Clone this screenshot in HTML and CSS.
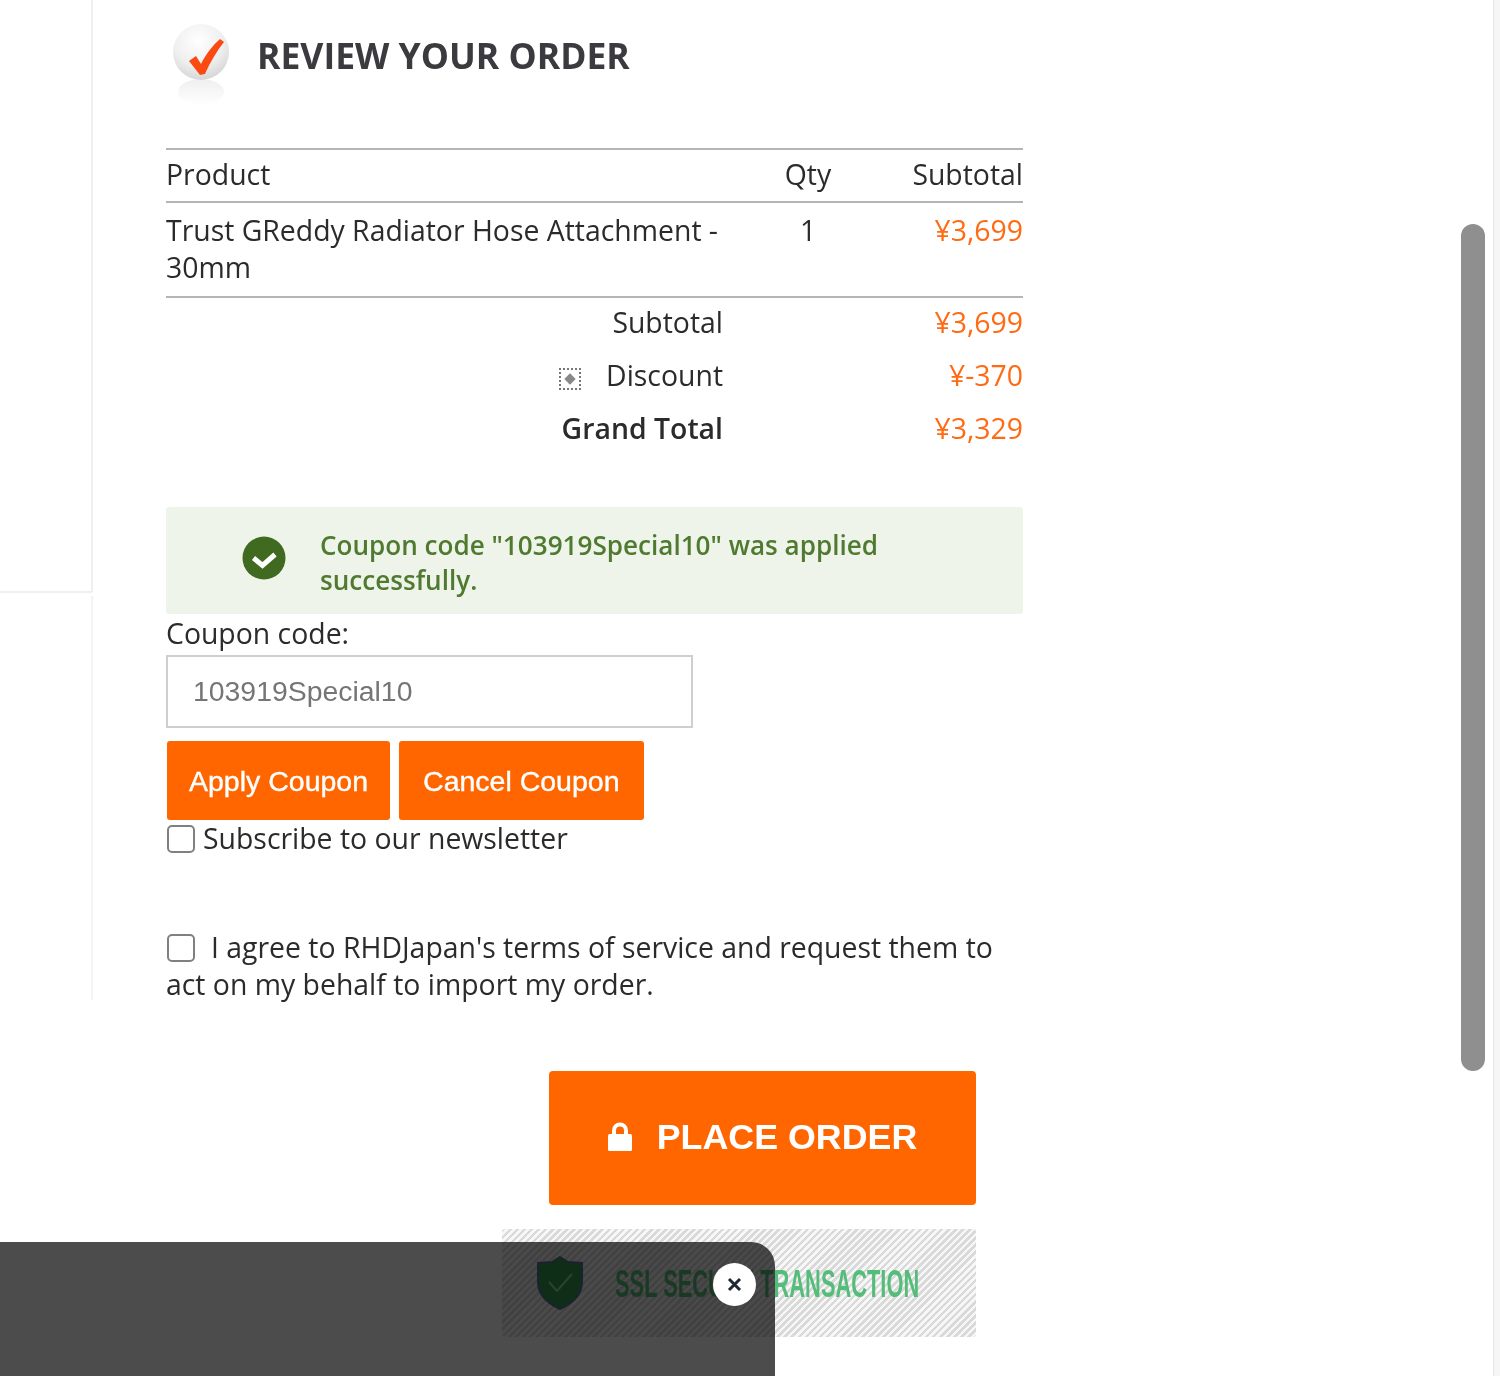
FILE: index.html
```html
<!DOCTYPE html>
<html lang="en">
<head>
    <meta charset="UTF-8">
    <title>Review Your Order</title>
    <link rel="stylesheet" href="styles.css">
</head>
<body>
    <div class="rail-top"></div>
    <div class="rail-bottom"></div>
    <div class="rail-cross"></div>

    <div class="review">
        <div class="review-title">
            <div class="step-icon">
                <svg width="62" height="82" viewBox="0 0 62 82">
                    <defs>
                        <radialGradient id="ball" cx="0.45" cy="0.3" r="0.8">
                            <stop offset="0" stop-color="#ffffff"/>
                            <stop offset="0.55" stop-color="#efefef"/>
                            <stop offset="1" stop-color="#cdcdcd"/>
                        </radialGradient>
                        <linearGradient id="shine" x1="0" y1="0" x2="0" y2="1">
                            <stop offset="0" stop-color="#efefef"/>
                            <stop offset="1" stop-color="#ffffff"/>
                        </linearGradient>
                    </defs>
                    <ellipse cx="31" cy="68" rx="23" ry="13" fill="url(#shine)"/>
                    <circle cx="31" cy="28" r="28" fill="url(#ball)"/>
                    <path d="M19 37 L26 32 L31 40 C36 30 43 21 50 15 L54 18 C47 27 40 38 35 50 L30 51 Z" fill="#fa4a12"/>
                </svg>
            </div>
            <h1>REVIEW YOUR ORDER</h1>
        </div>

        <table class="order-table">
            <thead>
                <tr>
                    <th class="col-name">Product</th>
                    <th class="col-qty">Qty</th>
                    <th class="col-sub">Subtotal</th>
                </tr>
            </thead>
            <tbody>
                <tr>
                    <td class="col-name">Trust GReddy Radiator Hose Attachment - 30mm</td>
                    <td class="col-qty">1</td>
                    <td class="col-sub price">¥3,699</td>
                </tr>
            </tbody>
            <tfoot>
                <tr>
                    <td class="total-label" colspan="2">Subtotal</td>
                    <td class="col-sub price">¥3,699</td>
                </tr>
                <tr>
                    <td class="total-label" colspan="2">
                        <span class="discount-icon"><i></i></span>Discount
                    </td>
                    <td class="col-sub price">¥-370</td>
                </tr>
                <tr class="grand">
                    <td class="total-label" colspan="2">Grand Total</td>
                    <td class="col-sub price">¥3,329</td>
                </tr>
            </tfoot>
        </table>

        <div class="coupon-ok">
            <svg class="ok-icon" width="44" height="44" viewBox="0 0 44 44">
                <circle cx="22" cy="22" r="21.5" fill="#3f6a1f"/>
                <path d="M11.5 22 L20.5 29.5 L33 18.5" fill="none" stroke="#fff" stroke-width="5"/>
            </svg>
            <p>Coupon code "103919Special10" was applied successfully.</p>
        </div>

        <label class="coupon-label" for="coupon">Coupon code:</label>
        <input class="coupon-input" id="coupon" type="text" value="103919Special10">
        <div class="coupon-buttons">
            <button type="button" class="btn-coupon">Apply Coupon</button>
            <button type="button" class="btn-coupon btn-cancel">Cancel Coupon</button>
        </div>

        <div class="subscribe">
            <span class="box"></span>
            <span>Subscribe to our newsletter</span>
        </div>

        <p class="terms"><span class="box"></span>I agree to RHDJapan's terms of service and request them to act on my behalf to import my order.</p>

        <div class="order-actions">
            <button type="button" class="btn-place">
                <svg width="24" height="29" viewBox="0 0 24 29">
                    <path d="M6 13 V8.5 a6 6 0 0 1 12 0 V13" fill="none" stroke="#fff" stroke-width="4"/>
                    <rect x="0" y="12" width="24" height="17" rx="1.5" fill="#fff"/>
                </svg>
                PLACE ORDER
            </button>
            <div class="ssl">
                <svg class="ssl-shield" width="46" height="54" viewBox="0 0 46 54">
                    <path d="M23 1 L31 6 L45 7 V26 C45 40 34 48 23 53 C12 48 1 40 1 26 V7 L15 6 Z" fill="#2f9a50" stroke="#5a6f9a" stroke-width="2"/>
                    <path d="M12 26 L20 35 L35 18" fill="none" stroke="#8fdca5" stroke-width="2"/>
                </svg>
                <span>SSL SECURE TRANSACTION</span>
            </div>
        </div>
    </div>

    <div class="scroll-thumb"></div>
    <div class="edge"></div>
    <div class="toast"></div>
    <button type="button" class="toast-close">
        <svg width="15" height="15" viewBox="0 0 15 15">
            <path d="M2 2 L13 13 M13 2 L2 13" stroke="#1f2733" stroke-width="3"/>
        </svg>
    </button>
</body>
</html>
```

FILE: styles.css
```css
html, body {
    margin: 0;
    height: 1376px;
    overflow: hidden;
}
body {
    position: relative;
    background-color: #fff;
    color: #2b2b2b;
    font-family: "Open Sans", sans-serif;
    font-size: 28.4px;
    line-height: 37px;
}

/* left column leftovers */
.rail-top {
    position: absolute;
    left: 91px;
    top: 0;
    width: 2px;
    height: 592px;
    background-color: #efefef;
}
.rail-bottom {
    position: absolute;
    left: 91px;
    top: 596px;
    width: 2px;
    height: 404px;
    background-color: #f4f4f4;
}
.rail-cross {
    position: absolute;
    left: 0;
    top: 591px;
    width: 92px;
    height: 2px;
    background-color: #efefef;
}

.review {
    width: 857px;
    margin-left: 166px;
}
.review-title {
    display: flex;
    align-items: flex-start;
    height: 148px;
}
.step-icon {
    margin: 24px 0 0 4px;
    width: 87px;
    flex-shrink: 0;
}
.review-title h1 {
    margin: 30px 0 0;
    font-size: 35.5px;
    line-height: 50px;
    font-weight: 700;
    color: #3b3b3f;
}

.order-table {
    width: 100%;
    border-collapse: collapse;
    table-layout: fixed;
    border-top: 2px solid #b5b5b5;
}
.order-table th {
    font-weight: 400;
    height: 49px;
    padding: 0 0 2px;
    border-bottom: 2px solid #b5b5b5;
}
.order-table td {
    padding: 0;
    vertical-align: top;
}
.order-table tbody td {
    padding: 9px 0 10px;
    border-bottom: 2px solid #b5b5b5;
}
.col-name {
    width: 600px;
    text-align: left;
}
.col-qty {
    text-align: center;
    width: 84px;
}
.col-sub {
    text-align: right;
}
.price {
    color: #ff6a13;
}
.order-table tfoot td {
    height: 53px;
    line-height: 48px;
}
.total-label {
    text-align: right;
}
.order-table tfoot .total-label {
    padding-right: 127px;
}
.grand .total-label {
    font-weight: 600;
}
.discount-icon {
    display: inline-block;
    width: 22px;
    height: 22px;
    margin-right: 25px;
    vertical-align: -4px;
    border: 2px dotted #777;
    box-sizing: border-box;
    position: relative;
}
.discount-icon i {
    position: absolute;
    left: 5px;
    top: 5px;
    width: 8px;
    height: 8px;
    background-color: #888;
    transform: rotate(45deg);
}

.coupon-ok {
    display: flex;
    align-items: center;
    margin-top: 50px;
    height: 107px;
    padding-left: 76px;
    background-color: #eef4ea;
    border-radius: 3px;
}
.ok-icon {
    flex-shrink: 0;
    margin: 0 34px 6px 0;
}
.coupon-ok p {
    margin: 4px 0 0;
    width: 600px;
    font-size: 26.1px;
    line-height: 35px;
    font-weight: 600;
    color: #4f7a2f;
}
.coupon-label {
    display: block;
    height: 41px;
    line-height: 38px;
}
.coupon-input {
    display: block;
    box-sizing: border-box;
    width: 527px;
    height: 73px;
    padding: 0 25px;
    border: 2px solid #cfcfcf;
    font-family: "Liberation Sans", Arial, sans-serif;
    font-size: 28.4px;
    color: #757575;
}
.coupon-buttons {
    display: flex;
    gap: 9px;
    margin: 13px 0 0 1px;
}
.btn-coupon {
    height: 79px;
    padding: 2px 22px 0;
    background-color: #ff6600;
    color: #fff;
    border: none;
    border-radius: 3px;
    font-family: "Liberation Sans", Arial, sans-serif;
    font-size: 28.5px;
    -webkit-text-stroke: 0.4px #fff;
}
.btn-cancel {
    padding: 2px 24px 0;
}
.box {
    display: inline-block;
    box-sizing: border-box;
    width: 28px;
    height: 28px;
    margin-left: 1px;
    border: 2px solid #808080;
    border-radius: 5px;
    background-color: #fff;
    flex-shrink: 0;
}
.subscribe {
    display: flex;
    align-items: center;
    gap: 8px;
}
.terms {
    margin: 72px 0 0;
}
.terms .box {
    vertical-align: -4px;
    margin-right: 16px;
}

.order-actions {
    width: 810px;
    margin-top: 68px;
    display: flex;
    flex-direction: column;
    align-items: flex-end;
}
.btn-place {
    display: flex;
    align-items: center;
    justify-content: center;
    gap: 25px;
    width: 427px;
    height: 134px;
    padding: 0 0 2px;
    background-color: #ff6600;
    color: #fff;
    border: none;
    border-radius: 4px;
    font-family: "Liberation Sans", Arial, sans-serif;
    font-size: 35.8px;
    font-weight: 700;
}
.btn-place svg {
    margin-bottom: 2px;
}
.ssl {
    display: flex;
    align-items: center;
    gap: 32px;
    box-sizing: border-box;
    width: 474px;
    height: 108px;
    margin-top: 24px;
    padding-left: 35px;
    background-image: repeating-linear-gradient(135deg, #d9d9d9 0, #d9d9d9 2.5px, #f7f7f7 2.5px, #f7f7f7 5px);
    border-radius: 3px;
}
.ssl-shield {
    flex-shrink: 0;
}
.ssl span {
    font-family: "Liberation Sans", Arial, sans-serif;
    font-size: 39px;
    font-weight: 700;
    color: #55bd7a;
    transform: scaleX(0.56);
    transform-origin: left center;
    white-space: nowrap;
}

.scroll-thumb {
    position: absolute;
    left: 1461px;
    top: 224px;
    width: 24px;
    height: 847px;
    border-radius: 12px;
    background-color: #8f8f8f;
}
.edge {
    position: absolute;
    left: 1493px;
    top: 0;
    width: 7px;
    height: 1376px;
    box-sizing: border-box;
    border-left: 1px solid #e6e6e6;
    background-color: #f6f6f6;
}
.toast {
    position: absolute;
    left: 0;
    top: 1242px;
    width: 775px;
    height: 134px;
    background-color: #4c4c4c;
    mix-blend-mode: multiply;
    border-top-right-radius: 24px;
}
.toast-close {
    position: absolute;
    left: 713px;
    top: 1263px;
    display: flex;
    align-items: center;
    justify-content: center;
    width: 43px;
    height: 43px;
    padding: 0;
    border: none;
    border-radius: 50%;
    background-color: #fff;
}
```
